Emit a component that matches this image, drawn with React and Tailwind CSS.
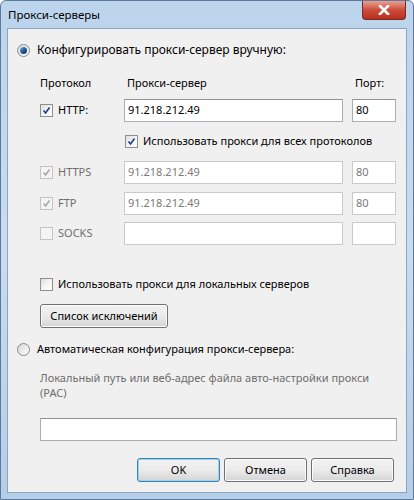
import React from 'react';

const FONT = { fontFamily: '"Noto Sans", "Open Sans", sans-serif' };

function Check({ checked, disabled }) {
  return (
    <span
      className={`relative inline-flex w-[13px] h-[13px] shrink-0 items-center justify-center border ${
        disabled ? 'border-[#c4c4c4] bg-[#f4f4f4]' : 'border-[#8e8f8f] bg-gradient-to-br from-[#dcdcdc] via-[#f4f4f4] to-white'
      }`}
    >
      {checked && (
        <svg width="9" height="9" viewBox="0 0 9 9">
          <path
            d="M1.5 4.5 L3.6 7 L7.5 1.5"
            fill="none"
            stroke={disabled ? '#a8a8a8' : '#1f3b8a'}
            strokeWidth="1.6"
          />
        </svg>
      )}
    </span>
  );
}

function Radio({ checked }) {
  return (
    <span className="inline-flex w-[13px] h-[13px] shrink-0 items-center justify-center rounded-full border border-[#8a8a8a] bg-gradient-to-br from-[#d6d6d6] to-white">
      {checked && (
        <span className="w-[7px] h-[7px] rounded-full bg-gradient-to-br from-[#7fb6e2] via-[#1e5e9a] to-[#0d2f5a]" />
      )}
    </span>
  );
}

function Field({ value, width, disabled }) {
  return (
    <div
      className={`h-[23px] border bg-white flex items-center pl-[3px] text-[11px] ${
        disabled ? 'border-[#c9cacd] text-[#7a7a7a]' : 'border-[#abadb3] border-t-[#8e9197] text-black'
      } ${width}`}
    >
      {value}
    </div>
  );
}

function Button({ children, width, primary }) {
  return (
    <div
      className={`h-[24px] flex items-center justify-center rounded-[3px] border text-[11px] text-black bg-gradient-to-b from-[#f2f2f2] via-[#ebebeb] to-[#d4d4d4] ${
        primary ? 'border-[#3c7fb1] shadow-[inset_0_0_0_1px_#9bd3f0]' : 'border-[#707070] shadow-[inset_0_0_0_1px_#fcfcfc]'
      } ${width}`}
    >
      {children}
    </div>
  );
}

function ProtoRow({ label, value, port, checked, disabled, mt }) {
  return (
    <div className={`flex items-center h-[23px] ${mt}`}>
      <div className="w-[116px] flex items-center pl-[32px]">
        <Check checked={checked} disabled={disabled} />
        <span className={`ml-[5px] text-[11px] ${disabled ? 'text-[#6f6f6f]' : 'text-black'}`}>{label}</span>
      </div>
      <Field value={value} width="w-[219px]" disabled={disabled} />
      <div className="w-[9px]" />
      <Field value={port} width="w-[44px]" disabled={disabled} />
    </div>
  );
}

export default function App() {
  return (
    <div
      style={FONT}
      className="relative w-[414px] h-[500px] overflow-hidden bg-gradient-to-b from-[#bcd4ec] via-[#c9dcf0] to-[#b5cde6] border border-[#5d7a9c] rounded-t-[6px]"
    >
      {/* Title bar */}
      <div className="h-[27px] flex items-center pl-[7px] text-[11.5px] text-black">Прокси-серверы</div>

      {/* Close button */}
      <div className="absolute top-0 right-[7px] w-[44px] h-[19px] rounded-b-[4px] border border-t-0 border-[#7a2a22] bg-gradient-to-b from-[#e8a093] via-[#cc4b3a] to-[#b8301f] flex items-center justify-center">
        <svg width="12" height="10" viewBox="0 0 12 10">
          <path d="M2 1 L10 9 M10 1 L2 9" stroke="#ffffff" strokeWidth="2.6" strokeLinecap="square" />
        </svg>
      </div>

      {/* Client area */}
      <div className="mx-[6px] h-[465px] border border-[#8aa4c4] bg-[#f0f0f0] flex flex-col text-[11px] text-black">
        <div className="flex items-center h-[16px] mt-[13px] pl-[9px]">
          <Radio checked />
          <span className="ml-[7px] text-[12px]">Конфигурировать прокси-сервер вручную:</span>
        </div>

        <div className="flex items-center h-[16px] mt-[17px]">
          <span className="w-[119px] pl-[32px]">Протокол</span>
          <span className="w-[228px]">Прокси-сервер</span>
          <span>Порт:</span>
        </div>

        <ProtoRow label="HTTP:" value="91.218.212.49" port="80" checked mt="mt-[8px]" />

        <div className="flex items-center h-[16px] mt-[11px] pl-[117px]">
          <Check checked />
          <span className="ml-[5px]">Использовать прокси для всех протоколов</span>
        </div>

        <ProtoRow label="HTTPS" value="91.218.212.49" port="80" checked disabled mt="mt-[12px]" />
        <ProtoRow label="FTP" value="91.218.212.49" port="80" checked disabled mt="mt-[8px]" />
        <ProtoRow label="SOCKS" value="" port="" disabled mt="mt-[7px]" />

        <div className="flex items-center h-[16px] mt-[31px] pl-[32px]">
          <Check />
          <span className="ml-[5px]">Использовать прокси для локальных серверов</span>
        </div>

        <div className="mt-[12px] pl-[32px]">
          <Button width="w-[128px]">Список исключений</Button>
        </div>

        <div className="flex items-center h-[16px] mt-[13px] pl-[9px]">
          <Radio />
          <span className="ml-[7px]">Автоматическая конфигурация прокси-сервера:</span>
        </div>

        <div className="mt-[13px] pl-[32px] pr-[30px] text-[#6d6d6d] leading-[15px]">
          Локальный путь или веб-адрес файла авто-настройки прокси (PAC)
        </div>

        <div className="mt-[18px] pl-[32px]">
          <Field value="" width="w-[357px]" />
        </div>

        <div className="mt-[17px] flex justify-end gap-[4px] pr-[12px]">
          <Button width="w-[83px]" primary>OK</Button>
          <Button width="w-[83px]">Отмена</Button>
          <Button width="w-[83px]">Справка</Button>
        </div>
      </div>
    </div>
  );
}
